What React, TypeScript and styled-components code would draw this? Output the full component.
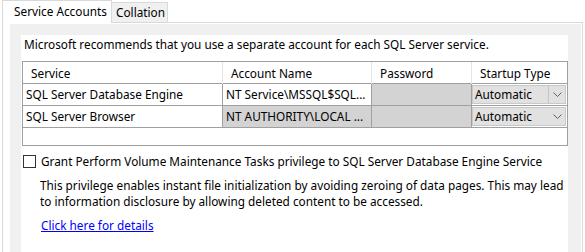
import React from 'react';
import styled, { createGlobalStyle } from 'styled-components';

const GlobalStyle = createGlobalStyle`
  body {
    margin: 0;
    background: #fff;
    font-family: "Noto Sans", "Open Sans", sans-serif;
    font-size: 11.8px;
    color: #000;
  }
`;

const Window = styled.div`
  width: 585px;
  height: 252px;
  overflow: hidden;
  display: flex;
  flex-direction: column;
`;

const TabStrip = styled.div`
  display: flex;
  align-items: flex-end;
  height: 22px;
  padding-left: 2px;
`;

const Tab = styled.div<{ $active?: boolean }>`
  position: relative;
  z-index: ${({ $active }) => ($active ? 1 : 0)};
  box-sizing: border-box;
  height: ${({ $active }) => ($active ? '23px' : '20px')};
  margin-bottom: ${({ $active }) => ($active ? '-1px' : '0')};
  width: ${({ $active }) => ($active ? '110px' : '56px')};
  padding-left: ${({ $active }) => ($active ? '11px' : '4px')};
  background: ${({ $active }) => ($active ? '#fff' : '#f0f0f0')};
  border: 1px solid #d9d9d9;
  border-bottom: none;
  border-left: ${({ $active }) => ($active ? '1px solid #d9d9d9' : 'none')};
  line-height: ${({ $active }) => ($active ? '20px' : '19px')};
  white-space: nowrap;
`;

const TabPage = styled.div`
  flex: 1;
  display: flex;
  margin-left: 2px;
  width: 581px;
  box-sizing: border-box;
  border: 1px solid #d9d9d9;
  border-bottom: none;
  padding: 1px 1px 0 7px;
`;

const GrayPanel = styled.div`
  flex: 1;
  display: flex;
  background: #f0f0f0;
  padding: 11px 13px 0 11px;
`;

const WhitePanel = styled.div`
  flex: 1;
  background: #fff;
  display: flex;
  flex-direction: column;
`;

const Line = styled.div<{ $indent?: number; $top?: number }>`
  line-height: 16px;
  margin-top: ${({ $top }) => $top ?? 0}px;
  padding-left: ${({ $indent }) => $indent ?? 3}px;
  white-space: nowrap;
`;

const GridBox = styled.div`
  margin: 9px 0 0 1px;
  height: 85px;
  box-sizing: border-box;
  border: 1px solid #a0a0a0;
  display: flex;
  flex-direction: column;
`;

const Row = styled.div`
  display: grid;
  grid-template-columns: 200px 149px 100px 95px;
  height: 22px;
  box-sizing: border-box;
  border-bottom: 1px solid #a0a0a0;
`;

const HeadCell = styled.div<{ $last?: boolean }>`
  padding-left: 8px;
  line-height: 22px;
  border-right: ${({ $last }) => ($last ? 'none' : '1px solid #e3e3e3')};
  white-space: nowrap;
`;

const Cell = styled.div<{ $gray?: boolean; $last?: boolean }>`
  padding-left: 3px;
  line-height: 21px;
  background: ${({ $gray }) => ($gray ? '#d3d3d3' : '#fff')};
  border-right: ${({ $last }) => ($last ? 'none' : '1px solid #a0a0a0')};
  white-space: nowrap;
  overflow: hidden;
`;

const ComboCell = styled.div`
  display: flex;
  padding: 1px 1px 1px 0;
  box-sizing: border-box;
`;

const Combo = styled.div`
  flex: 1;
  display: flex;
  align-items: center;
  background: #e1e1e1;
  border: 1px solid #c8c8c8;
  padding-left: 2px;
  line-height: 17px;
`;

const ComboText = styled.span`
  flex: 1;
`;

const Drop = styled.div<{ $split?: boolean }>`
  width: 16px;
  align-self: stretch;
  display: flex;
  align-items: center;
  justify-content: center;
  border-left: ${({ $split }) => ($split ? '1px solid #c4c4c4' : '1px solid transparent')};
`;

const CheckRow = styled.div`
  display: flex;
  align-items: center;
  margin: 7px 0 0 2px;
  height: 16px;
  white-space: nowrap;
`;

const Box = styled.div`
  width: 13px;
  height: 13px;
  box-sizing: border-box;
  border: 1px solid #333;
  background: #fff;
  margin-right: 5px;
`;

const Desc = styled.div`
  margin-top: 8px;
`;

const Link = styled.a`
  margin: 8px 0 0 20px;
  line-height: 16px;
  color: #0000ff;
  text-decoration: underline;
  align-self: flex-start;
`;

const Chevron = () => (
  <svg width="9" height="5" viewBox="0 0 9 5">
    <path d="M0.5 0.5 L4.5 4.5 L8.5 0.5" fill="none" stroke="#606060" strokeWidth="1" />
  </svg>
);

const rows = [
  { service: 'SQL Server Database Engine', account: 'NT Service\\MSSQL$SQL...', grayAccount: false, split: true },
  { service: 'SQL Server Browser', account: 'NT AUTHORITY\\LOCAL ...', grayAccount: true, split: false },
];

export default function App() {
  return (
    <>
      <GlobalStyle />
      <Window>
        <TabStrip>
          <Tab $active>Service Accounts</Tab>
          <Tab>Collation</Tab>
        </TabStrip>
        <TabPage>
          <GrayPanel>
            <WhitePanel>
              <Line $top={1}>
                Microsoft recommends that you use a separate account for each SQL Server service.
              </Line>
              <GridBox>
                <Row>
                  <HeadCell>Service</HeadCell>
                  <HeadCell>Account Name</HeadCell>
                  <HeadCell>Password</HeadCell>
                  <HeadCell $last>Startup Type</HeadCell>
                </Row>
                {rows.map((r) => (
                  <Row key={r.service}>
                    <Cell>{r.service}</Cell>
                    <Cell $gray={r.grayAccount}>{r.account}</Cell>
                    <Cell $gray />
                    <ComboCell>
                      <Combo>
                        <ComboText>Automatic</ComboText>
                        <Drop $split={r.split}>
                          <Chevron />
                        </Drop>
                      </Combo>
                    </ComboCell>
                  </Row>
                ))}
              </GridBox>
              <CheckRow>
                <Box />
                Grant Perform Volume Maintenance Tasks privilege to SQL Server Database Engine Service
              </CheckRow>
              <Desc>
                <Line $indent={19}>
                  This privilege enables instant file initialization by avoiding zeroing of data pages. This may lead
                </Line>
                <Line $indent={19}>to information disclosure by allowing deleted content to be accessed.</Line>
              </Desc>
              <Link href="#">Click here for details</Link>
            </WhitePanel>
          </GrayPanel>
        </TabPage>
      </Window>
    </>
  );
}
